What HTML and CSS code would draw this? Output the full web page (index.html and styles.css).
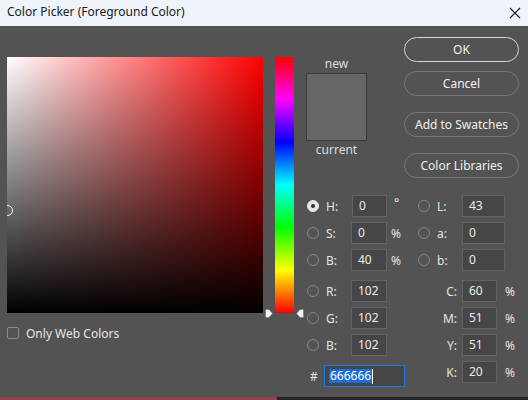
FILE: index.html
```html
<!DOCTYPE html>
<html>
<head>
<meta charset="utf-8">
<link rel="stylesheet" href="styles.css">
</head>
<body>
<div class="window">
  <div class="titlebar">
    <span class="title">Color Picker (Foreground Color)</span>
    <svg class="close" width="12" height="12" viewBox="0 0 12 12"><path d="M1 1 L11 11 M11 1 L1 11" stroke="#1a1a1a" stroke-width="1.1" fill="none"/></svg>
  </div>
  <div class="content">
    <div class="left">
      <div class="field">
        <div class="cursor"></div>
      </div>
      <label class="webcolors"><span class="checkbox"></span><span>Only Web Colors</span></label>
    </div>
    <div class="hue">
      <svg class="marker marker-l" width="8" height="9" viewBox="0 0 8 9"><polygon points="0.5,0.5 4,0.5 7.5,4.5 4,8.5 0.5,8.5" fill="#f4f4f4" stroke="#777" stroke-width="0.6"/></svg>
      <svg class="marker marker-r" width="8" height="9" viewBox="0 0 8 9"><polygon points="7.5,0.5 4,0.5 0.5,4.5 4,8.5 7.5,8.5" fill="#f4f4f4" stroke="#777" stroke-width="0.6"/></svg>
    </div>
    <div class="right">
      <div class="top">
        <div class="swatch-col">
          <div class="sw-label">new</div>
          <div class="swatch"></div>
          <div class="sw-label sw-current">current</div>
        </div>
        <div class="buttons">
          <button class="btn btn-default">OK</button>
          <button class="btn btn-cancel">Cancel</button>
          <button class="btn btn-gap">Add to Swatches</button>
          <button class="btn btn-gap">Color Libraries</button>
        </div>
      </div>
      <div class="fields">
        <div class="row">
          <span class="radio checked"></span><span class="lbl">H:</span><span class="inp inp-h">0</span><span class="unit deg">°</span>
          <span class="radio"></span><span class="lbl">L:</span><span class="inp inp-wide">43</span>
        </div>
        <div class="row">
          <span class="radio"></span><span class="lbl">S:</span><span class="inp">0</span><span class="unit">%</span>
          <span class="radio"></span><span class="lbl">a:</span><span class="inp inp-wide">0</span>
        </div>
        <div class="row">
          <span class="radio"></span><span class="lbl">B:</span><span class="inp">40</span><span class="unit">%</span>
          <span class="radio"></span><span class="lbl">b:</span><span class="inp inp-wide">0</span>
        </div>
        <div class="bottom">
          <div class="rgb">
            <div class="row"><span class="radio"></span><span class="lbl">R:</span><span class="inp">102</span></div>
            <div class="row"><span class="radio"></span><span class="lbl">G:</span><span class="inp">102</span></div>
            <div class="row"><span class="radio"></span><span class="lbl">B:</span><span class="inp">102</span></div>
            <div class="row hexrow"><span class="hash">#</span><span class="hex"><span class="sel">666666</span><span class="caret"></span></span></div>
          </div>
          <div class="cmyk">
            <div class="row"><span class="clbl">C:</span><span class="inp">60</span><span class="cunit">%</span></div>
            <div class="row"><span class="clbl">M:</span><span class="inp">51</span><span class="cunit">%</span></div>
            <div class="row"><span class="clbl">Y:</span><span class="inp">51</span><span class="cunit">%</span></div>
            <div class="row"><span class="clbl">K:</span><span class="inp">20</span><span class="cunit">%</span></div>
          </div>
        </div>
      </div>
    </div>
  </div>
</div>
<div class="taskbar"><span class="tb-left"></span><span class="tb-right"></span></div>
</body>
</html>
```

FILE: styles.css
```css
* { box-sizing: border-box; }
html, body { margin: 0; padding: 0; }
body {
  width: 528px;
  height: 400px;
  overflow: hidden;
  background: #262626;
  font-family: "Noto Sans", "Open Sans", sans-serif;
  font-size: 12px;
  color: #e4e4e4;
}
.window {
  height: 397px;
  background: #535353;
  display: flex;
  flex-direction: column;
}
.titlebar {
  height: 26px;
  background: #eef2f9;
  display: flex;
  align-items: center;
  justify-content: space-between;
  padding: 0 7px 3px 7px;
  color: #1a1a1a;
}
.title { font-size: 12px; }
.close { margin-right: 0; margin-top: 2px; }
.content {
  display: flex;
  padding: 11px 0 0 7px;
}
.left {
  margin-top: 20px;
  width: 256px;
}
.field {
  width: 256px;
  height: 256px;
  position: relative;
  overflow: hidden;
  background:
    linear-gradient(to top, #000, rgba(0,0,0,0)),
    linear-gradient(to right, #fff, rgba(255,255,255,0)),
    #ff0000;
}
.cursor {
  position: absolute;
  left: -5px;
  top: 148px;
  width: 11px;
  height: 11px;
  border: 1.5px solid #fff;
  border-radius: 50%;
}
.webcolors {
  display: flex;
  align-items: center;
  gap: 7px;
  margin-top: 14px;
  height: 12px;
  color: #e6e6e6;
}
.checkbox {
  width: 12px;
  height: 12px;
  border: 1px solid #8c8c8c;
  border-radius: 2px;
}
.hue {
  margin-left: 12px;
  margin-top: 20px;
  width: 19px;
  height: 256px;
  position: relative;
  background: linear-gradient(to bottom, #f00 0%, #f0f 16.66%, #00f 33.33%, #0ff 50%, #0f0 66.66%, #ff0 83.33%, #f00 100%);
}
.marker { position: absolute; top: 252px; }
.marker-l { left: -10px; }
.marker-r { left: 21px; }
.right {
  margin-left: 12px;
  display: flex;
  flex-direction: column;
}
.top { display: flex; }
.swatch-col {
  width: 61px;
  padding-top: 20px;
  display: flex;
  flex-direction: column;
  align-items: center;
}
.sw-label {
  line-height: 14px;
  height: 14px;
  color: #dcdcdc;
}
.swatch {
  width: 61px;
  height: 68px;
  margin-top: 2px;
  background: #666666;
  border: 1px solid #3a3a3a;
}
.sw-current { margin-top: 2px; }
.buttons {
  margin-left: 37px;
  width: 115px;
  display: flex;
  flex-direction: column;
}
.btn {
  height: 25px;
  width: 115px;
  border-radius: 13px;
  border: 1px solid #777;
  background: transparent;
  color: #f0f0f0;
  font-family: "Noto Sans", "Open Sans", sans-serif;
  font-size: 12px;
  padding: 0;
  line-height: 22px;
}
.btn-default { border: 1.5px solid #d4d4d4; }
.btn-cancel { margin-top: 9px; }
.btn-gap { margin-top: 16px; }
.fields {
  margin-top: 17px;
  margin-left: 1px;
  display: flex;
  flex-direction: column;
  gap: 5px;
}
.row {
  display: flex;
  align-items: center;
  height: 22px;
}
.radio {
  width: 12px;
  height: 12px;
  border: 1px solid #858585;
  border-radius: 50%;
  margin-right: 7px;
  position: relative;
  flex: none;
}
.radio.checked {
  background: #e6e6e6;
  border-color: #e6e6e6;
}
.radio.checked::after {
  content: "";
  position: absolute;
  left: 3px;
  top: 3px;
  width: 4px;
  height: 4px;
  border-radius: 50%;
  background: #2e2e2e;
}
.lbl { width: 25px; flex: none; }
.inp {
  width: 36px;
  height: 22px;
  flex: none;
  background: #464646;
  border: 1px solid #626262;
  padding-left: 6px;
  line-height: 20px;
  color: #ececec;
}
.inp-h { margin-left: 1px; width: 35px; }
.inp-wide { width: 43px; }
.unit { width: 31px; padding-left: 4px; flex: none; }
.deg { position: relative; top: -4px; padding-left: 7px; }
.bottom {
  display: flex;
  margin-top: 4px;
}
.rgb {
  width: 111px;
  display: flex;
  flex-direction: column;
  gap: 5px;
}
.hexrow { margin-top: 4px; }
.hash { width: 17px; text-align: left; padding-left: 3px; flex: none; }
.hex {
  width: 81px;
  height: 22px;
  background: #464646;
  border: 1px solid #1f78e8;
  display: flex;
  align-items: center;
  padding-left: 4px;
}
.sel {
  background: #1c6dd8;
  color: #fff;
  line-height: 14px;
  padding: 0 1px;
}
.caret {
  width: 1px;
  height: 15px;
  background: #fff;
}
.cmyk {
  display: flex;
  flex-direction: column;
  gap: 5px;
}
.clbl { width: 44px; text-align: right; padding-right: 5px; flex: none; }
.cmyk .inp { width: 35px; }
.cunit { padding-left: 8px; }
.taskbar { display: flex; height: 3px; }
.tb-left { width: 277px; background: #94404c; }
.tb-right { flex: 1; background: #252525; }
```
